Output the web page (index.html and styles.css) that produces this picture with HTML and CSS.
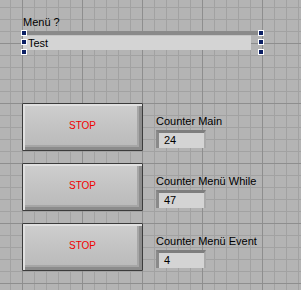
FILE: index.html
```html
<!DOCTYPE html>
<html lang="de">

<head>
    <meta charset="UTF-8">
    <title>Menü Test</title>
    <link rel="stylesheet" href="styles.css">
</head>

<body>
    <div class="panel">
        <div class="label">Menü ?</div>
        <div class="strCtrl">
            <div class="strField">Test</div>
            <span class="handle h-tl"></span>
            <span class="handle h-ml"></span>
            <span class="handle h-bl"></span>
            <span class="handle h-tr"></span>
            <span class="handle h-mr"></span>
            <span class="handle h-br"></span>
        </div>

        <div class="rows">
            <div class="row">
                <div class="btn">STOP</div>
                <div class="counter">
                    <div class="label">Counter Main</div>
                    <div class="num">24</div>
                </div>
            </div>
            <div class="row">
                <div class="btn">STOP</div>
                <div class="counter">
                    <div class="label">Counter Menü While</div>
                    <div class="num">47</div>
                </div>
            </div>
            <div class="row">
                <div class="btn">STOP</div>
                <div class="counter">
                    <div class="label">Counter Menü Event</div>
                    <div class="num">4</div>
                </div>
            </div>
        </div>
    </div>
</body>

</html>
```

FILE: styles.css
```css
* {
    box-sizing: border-box;
}

body {
    margin: 0;
    font-family: "Liberation Sans", Arial, sans-serif;
    font-size: 11px;
    color: #000;
}

.panel {
    width: 301px;
    height: 290px;
    padding: 16px 0 0 22px;
    background-color: #b4b4b4;
    background-image:
        linear-gradient(to right, #8e8e8e 1px, transparent 1px),
        linear-gradient(to bottom, #8e8e8e 1px, transparent 1px),
        linear-gradient(to right, #a2a2a2 1px, transparent 1px),
        linear-gradient(to bottom, #a2a2a2 1px, transparent 1px);
    background-size: 60px 60px, 60px 60px, 12px 12px, 12px 12px;
    background-position: 22px 43px;
    overflow: hidden;
}

.label {
    height: 13px;
    line-height: 13px;
    padding-left: 1px;
    white-space: nowrap;
}

/* string control */
.strCtrl {
    position: relative;
    width: 241px;
    margin-top: 2px;
    border-top: 4px solid #8a8a8a;
}

.strField {
    width: 228px;
    height: 15px;
    line-height: 15px;
    margin-left: 1px;
    padding-left: 5px;
    background-color: #d4d4d4;
    border-top: 1px solid #c4c4c4;
}

.handle {
    position: absolute;
    width: 6px;
    height: 6px;
    background-color: #0c2064;
    border: 1px solid #fff;
}

.h-tl { left: -1px; top: -5px; }
.h-ml { left: -1px; top: 4px; }
.h-bl { left: -1px; top: 14px; }
.h-tr { right: -1px; top: -5px; }
.h-mr { right: -1px; top: 4px; }
.h-br { right: -1px; top: 14px; }

/* buttons and counters */
.rows {
    margin-top: 53px;
    display: flex;
    flex-direction: column;
    gap: 12px;
}

.row {
    display: flex;
    align-items: flex-start;
    gap: 12px;
}

.btn {
    width: 121px;
    height: 48px;
    line-height: 44px;
    text-align: center;
    font-size: 10px;
    color: #f00000;
    border: 1px solid #3c3c3c;
    border-radius: 1px;
    background: linear-gradient(to bottom, #cfcfcf, #c4c4c4 45%, #b9b9b9);
    box-shadow:
        inset 2px 2px 0 #e0e0e0,
        inset -3px -3px 0 #8c8c8c,
        inset -5px -5px 0 #a6a6a6;
}

.counter {
    padding-top: 12px;
}

.num {
    width: 50px;
    height: 18px;
    line-height: 15px;
    margin: 2px 0 0 1px;
    padding-left: 5px;
    background-color: #d4d4d4;
    border-top: 3px solid #7e7e7e;
    border-left: 3px solid #8a8a8a;
    border-right: 2px solid #a9a9a9;
}
```
